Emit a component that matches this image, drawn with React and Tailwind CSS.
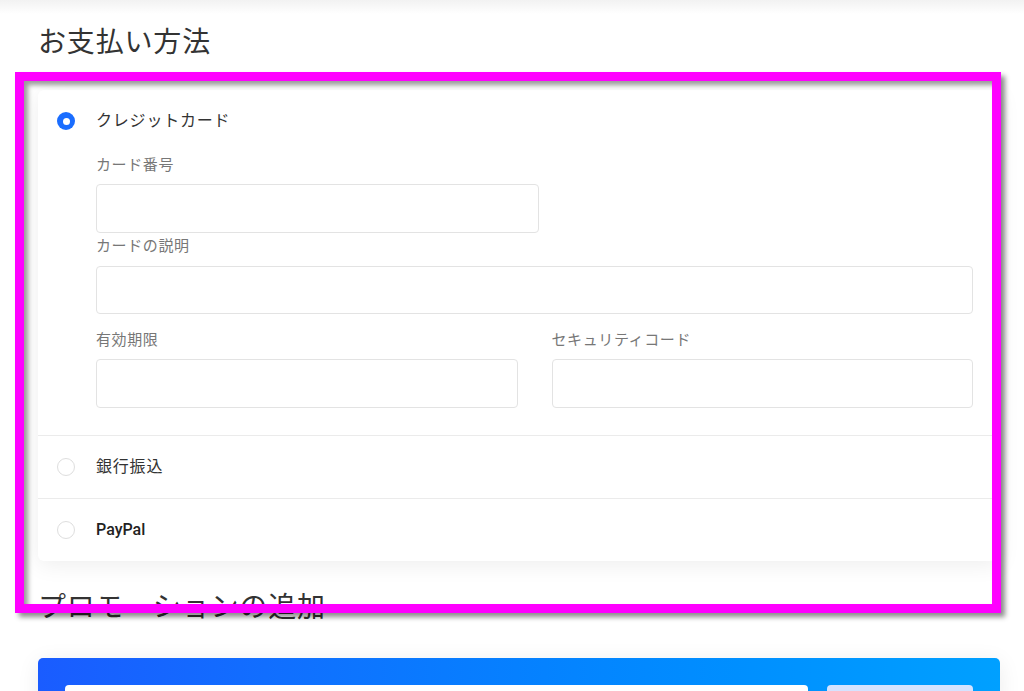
import React from 'react';

const font = { fontFamily: 'Roboto, "Noto Sans CJK JP", sans-serif' };

const Radio = ({ checked }) =>
  checked ? (
    <span className="flex h-[18px] w-[18px] shrink-0 items-center justify-center rounded-full bg-[#1a6dff]">
      <span className="h-[7px] w-[7px] rounded-full bg-white"></span>
    </span>
  ) : (
    <span className="h-[18px] w-[18px] shrink-0 rounded-full border-[1.5px] border-[#dedede] bg-white"></span>
  );

const Field = ({ label, className = '', labelClass = 'mb-[9px]', inputClass = 'h-[49px]' }) => (
  <div className={className}>
    <div className={`h-[20px] text-[15px] leading-[20px] tracking-[0.04em] text-[#777] ${labelClass}`}>{label}</div>
    <div className={`w-full rounded-[4px] border border-[#e3e3e3] bg-white ${inputClass}`}></div>
  </div>
);

const Option = ({ checked, label, bold, children }) => (
  <div className={`pl-[19px] pr-[27px] pt-[19px] ${children ? 'pb-[27px]' : 'pb-[19px]'}`}>
    <div className="flex h-[24px] items-center gap-[21px]">
      <Radio checked={checked} />
      <span
        className={
          bold
            ? 'text-[16px] font-medium text-[#222]'
            : 'text-[16px] tracking-[0.05em] text-[#333]'
        }
      >
        {label}
      </span>
    </div>
    {children && <div className="ml-[39px]">{children}</div>}
  </div>
);

export default function App() {
  return (
    <div className="relative h-[691px] w-full overflow-hidden bg-white" style={font}>
      <div className="h-[14px] bg-gradient-to-b from-[#f2f2f2] to-white"></div>

      <div className="pl-[38px] pr-[24px]">
        <h2 className="mt-[9px] text-[28px] font-normal leading-[40px] tracking-[0.03em] text-[#333]">お支払い方法</h2>

        <div className="mt-[27px] divide-y divide-[#ebebeb] rounded-[6px] bg-white shadow-[0_4px_22px_rgba(0,0,0,0.07)]">
          <Option checked label="クレジットカード">
            <Field label="カード番号" className="mt-[22px] w-[443px]" />
            <Field label="カードの説明" className="mt-[3px]" labelClass="mb-[10px]" inputClass="h-[48px]" />
            <div className="mt-[16px] grid grid-cols-2 gap-x-[34px]">
              <Field label="有効期限" />
              <Field label="セキュリティコード" />
            </div>
          </Option>
          <Option label="銀行振込" />
          <Option label="PayPal" bold />
        </div>

        <h2 className="mt-[27px] text-[28px] font-normal leading-[40px] tracking-[0.03em] text-[#333]">プロモーションの追加</h2>

        <div className="mt-[30px] flex gap-[19px] rounded-[5px] bg-gradient-to-r from-[#1a5cff] to-[#00a0ff] p-[27px] shadow-[0_4px_22px_rgba(0,0,0,0.08)]">
          <div className="h-[48px] flex-1 rounded-[4px] bg-white"></div>
          <div className="h-[48px] w-[146px] rounded-[4px] bg-[#d5e3ff]"></div>
        </div>
      </div>

      {/* highlight annotation over the payment card */}
      <div className="pointer-events-none absolute left-[15px] top-[72px] h-[541px] w-[986px] border-[9px] border-[#ff00ff] shadow-[4px_4px_5px_rgba(0,0,0,0.45),inset_4px_4px_5px_rgba(0,0,0,0.4)]"></div>
    </div>
  );
}
